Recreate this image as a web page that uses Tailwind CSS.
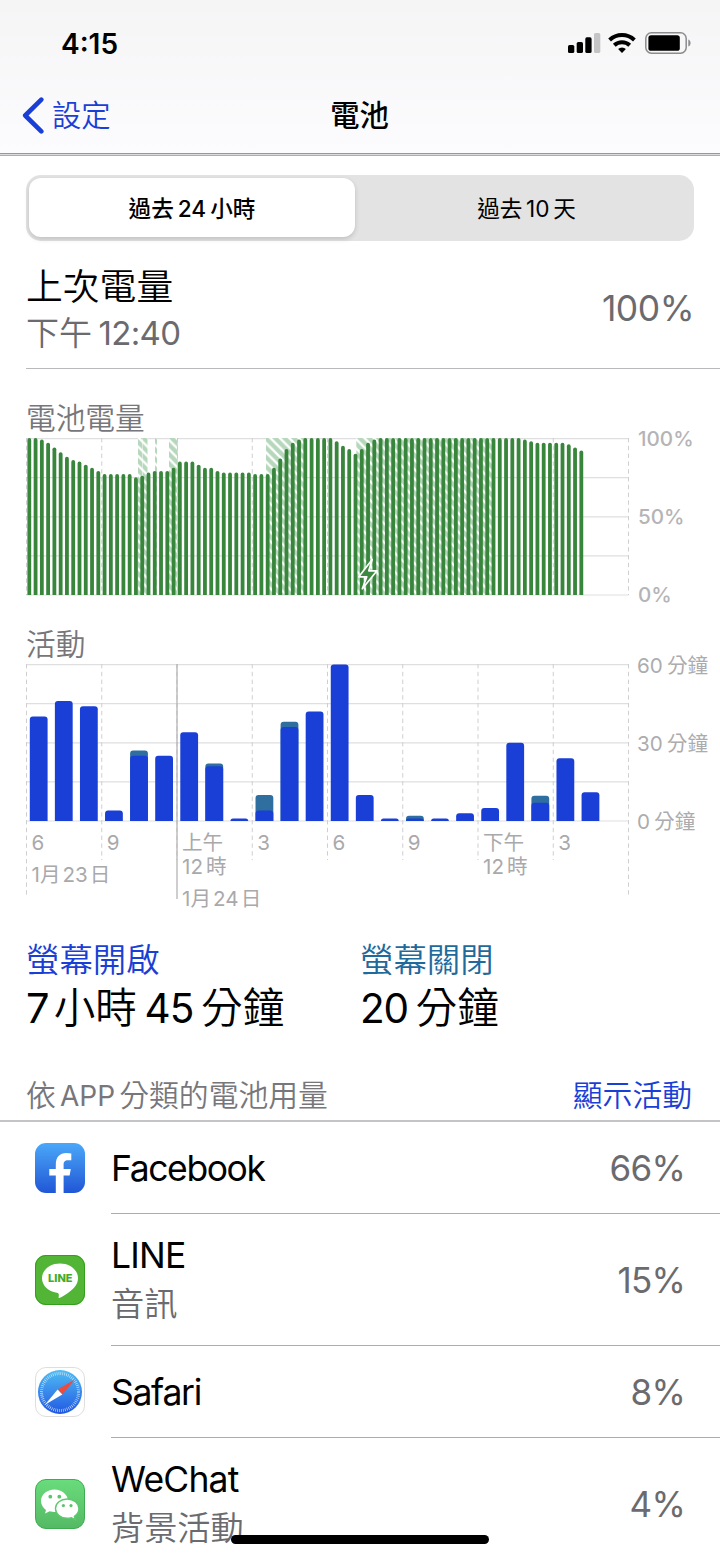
<!DOCTYPE html>
<html lang="zh-Hant">
  <head>
    <meta charset="UTF-8" />
    <meta name="viewport" content="width=device-width, initial-scale=1.0" />
    <title>電池</title>
    <script src="https://cdn.jsdelivr.net/npm/@tailwindcss/browser@4"></script>
  </head>
  <body class="bg-white">
    <div class="relative w-[720px] h-[1558px] overflow-hidden bg-white text-black whitespace-nowrap font-['Inter','Noto_Sans_CJK_TC',sans-serif]">
      <header class="h-[156px] flex flex-col bg-linear-to-b from-[#f5f5f6] to-[#fcfcfe]">
        <div class="h-[86px] pl-[61px] pr-[29px] flex items-center justify-between">
          <span class="pt-[1px] text-[28px] leading-8 font-semibold">4:15</span>
          <div class="flex items-center">
            <svg class="w-[33px] h-[20px] mr-[7px]" viewBox="0 0 33 20">
              <rect x="0" y="12" width="6.3" height="8" rx="1.6" />
              <rect x="8.7" y="9" width="6.3" height="11" rx="1.6" />
              <rect x="17.3" y="4.3" width="6.3" height="15.7" rx="1.6" />
              <rect x="26" y="0" width="6.3" height="20" rx="1.6" fill="#c4c4c6" />
            </svg>
            <svg class="w-[28px] h-[20px] mr-[9px]" viewBox="0 0 28 20">
              <g fill="none" stroke="#000" stroke-width="4">
                <path d="M1.6 7a18 18 0 0 1 24.8 0" />
                <path d="M6.3 12.2a11.3 11.3 0 0 1 15.4 0" />
              </g>
              <path d="M14 20l-3.9-4a5.6 5.6 0 0 1 7.8 0z" />
            </svg>
            <svg class="w-[46px] h-[22px]" viewBox="0 0 46 22">
              <rect x="0.8" y="0.8" width="40.4" height="20.4" rx="5.6" fill="none" stroke="#8c8c8e" stroke-width="1.5" />
              <rect x="3.4" y="3.2" width="31.4" height="15.6" rx="2.6" />
              <path d="M43.3 7.4c3 1.2 3 6 0 7.2z" fill="#8c8c8e" />
            </svg>
          </div>
        </div>
        <div class="h-[67px] pb-[9px] grid grid-cols-3 items-center">
          <a class="flex items-center pl-[22px] text-[#1a3fd6]">
            <svg class="w-[22px] h-[37px] mr-[8px]" viewBox="0 0 22 37">
              <path d="M19.3 2.6L3.2 18.5L19.3 34.4" fill="none" stroke="#1a3fd6" stroke-width="4.6" stroke-linecap="round" stroke-linejoin="round" />
            </svg>
            <span class="pt-[1px] text-[29.3px] leading-9 font-[350]">設定</span>
          </a>
          <h1 class="pt-[1px] pr-[1px] text-center text-[29.3px] leading-9 font-medium">電池</h1>
        </div>
        <div class="h-[3px] bg-[#dcdcde] border-t border-b border-t-[#98989a] border-b-[#adadaf]"></div>
      </header>

      <div class="mt-[19px] ml-[26px] w-[668px] h-[66px] rounded-[15px] bg-[#e3e3e4] p-[3px] flex text-[22.6px] leading-8">
        <div class="w-[326px] h-[59px] pt-[2px] rounded-[12px] bg-white shadow-[0_2px_5px_rgba(0,0,0,0.16)] flex items-center justify-center font-medium">過去<span class="mx-[0.18em]">24</span>小時</div>
        <div class="flex-1 h-[60px] pt-[1px] flex items-center justify-center pl-[7px] font-normal">過去<span class="mx-[0.16em]">10</span>天</div>
      </div>

      <section class="ml-[26px] mt-[20px] h-[108px] pr-[26px] pb-[11px] flex items-center justify-between border-b border-[#b9b9bb]">
        <div>
          <div class="text-[36.8px] leading-[48px] font-[350]">上次電量</div>
          <div class="text-[33px] leading-[45px] text-[#6b6b6f] font-[350]">下午<span class="ml-[0.2em] tracking-[-0.7px] font-normal">12:40</span></div>
        </div>
        <div class="text-[35.5px] leading-10 tracking-[-0.5px] text-[#6b6b6f]">100%</div>
      </section>

      <section class="ml-[26px] mt-[31px]">
        <h2 class="h-[38px] text-[29.7px] leading-[36px] font-[350] text-[#77777b]">電池電量</h2>
        <div class="flex h-[158px]">
          <svg id="level" class="w-[604px] h-[158px]" viewBox="0 0 604 158">
            <defs>
              <pattern id="hatch" width="9.4" height="9.4" patternUnits="userSpaceOnUse">
                <rect width="9.4" height="9.4" fill="#b6d7bb" />
                <path d="M-2 -2L11.4 11.4M-2 7.4L2 11.4M7.4 -2L11.4 2" stroke="#fff" stroke-width="2.4" />
              </pattern>
            </defs>
          </svg>
          <div class="-my-[12px] ml-[8px] flex flex-col justify-between text-[20.6px] leading-[26px] font-medium text-[#b4b4b6]">
            <span>100%</span><span>50%</span><span>0%</span>
          </div>
        </div>
      </section>

      <section class="ml-[26px] mt-[29px] h-[272px]">
        <h2 class="h-[39px] text-[29.7px] leading-[38px] font-[350] text-[#77777b]">活動</h2>
        <div class="relative flex h-[158px]">
          <svg id="activity" class="w-[604px] h-[236px] shrink-0" viewBox="0 0 604 236"></svg>
          <div class="-mt-[11px] -mb-[13px] ml-[7px] flex flex-col justify-between text-[20.6px] leading-[26px] text-[#acacae]">
            <span>60<span class="ml-[0.2em]">分鐘</span></span>
            <span>30<span class="ml-[0.2em]">分鐘</span></span>
            <span>0<span class="ml-[0.2em]">分鐘</span></span>
          </div>
          <!-- hour and date labels lie over the lower part of the grid -->
          <div class="absolute left-[5.5px] top-[167px] grid grid-cols-[repeat(8,75.25px)] text-[20.6px] leading-6 text-[#a9a9ab]">
            <div>6<p class="pt-[8px]">1月<span class="mx-[0.1em]">23</span>日</p></div>
            <div>9</div>
            <div>上午<br />12<span class="ml-[0.15em]">時</span><p class="pt-[8px]">1月<span class="mx-[0.1em]">24</span>日</p></div>
            <div>3</div>
            <div>6</div>
            <div>9</div>
            <div>下午<br />12<span class="ml-[0.15em]">時</span></div>
            <div>3</div>
          </div>
        </div>
      </section>

      <section class="mt-[40px] pl-[26px] grid grid-cols-[334px_1fr] font-[350]">
        <div>
          <div class="text-[33.4px] leading-[46px] text-[#1a3fd6]">螢幕開啟</div>
          <div class="h-[50px] text-[41.6px] leading-[50px]"><span class="font-normal">7</span><span class="ml-[0.1em]">小時</span><span class="mx-[0.19em] tracking-[-1px] text-[40.5px] font-normal">45</span>分鐘</div>
        </div>
        <div>
          <div class="text-[33.4px] leading-[46px] text-[#1f6a9c]">螢幕關閉</div>
          <div class="h-[50px] text-[41.6px] leading-[50px]"><span class="mr-[0.19em] tracking-[-1.2px] text-[40.5px] font-normal">20</span>分鐘</div>
        </div>
      </section>

      <div class="mt-[39px] h-[50px] pb-[2px] pl-[26px] pr-[28px] flex items-center justify-between border-b-2 border-[#c4c4c6] text-[29.8px] leading-9 font-[350]">
        <span class="text-[#77777b]">依<span class="mx-[0.15em] text-[28px] font-normal">APP</span>分類的電池用量</span>
        <a class="text-[#1a3fd6]">顯示活動</a>
      </div>

      <ul>
        <li class="h-[92px] pl-[35px] flex items-center">
          <svg class="w-[50px] h-[50px]" viewBox="0 0 50 50">
            <defs>
              <linearGradient id="fb" x2="0" y2="1"><stop stop-color="#4ba8f8" /><stop offset="1" stop-color="#2156d6" /></linearGradient>
            </defs>
            <rect width="50" height="50" rx="11" fill="url(#fb)" />
            <path d="M20.8 50V32.5h-6.5V26h6.5v-4.3c0-7.8 4-11.7 10.5-11.7 2 0 3.7.2 5 .5v6.7h-3.2c-3.4 0-4.5 1.6-4.5 4.3V26h7.2l-1.2 6.5h-6V50z" fill="#fff" />
          </svg>
          <div class="ml-[26px] flex-1 self-stretch flex items-center justify-between pr-[35px] border-b border-[#adadaf] text-[35.5px] leading-10">
            <span class="tracking-[-1.4px] pt-[2px]">Facebook</span><span class="text-[35px] tracking-[-0.8px] text-[#6b6b6f]">66%</span>
          </div>
        </li>
        <li class="h-[132px] pl-[35px] flex items-center">
          <svg class="w-[50px] h-[50px]" viewBox="0 0 50 50">
            <rect width="50" height="50" rx="11" fill="#53b535" />
            <rect x="0.5" y="0.5" width="49" height="49" rx="10.5" fill="none" stroke="#33a01c" />
            <path d="M25 8.5C15 8.5 7 15 7 23.3c0 7.2 6.2 13.2 14.8 14.5 2.2.4 2.3 1.2 1.8 4.7 0 .5.2.8.8.5 4.2-1.8 11-6.2 14.6-10.2C41.7 30 43 26.7 43 23.3 43 15 35 8.5 25 8.5z" fill="#fff" />
            <text x="25.3" y="27.3" text-anchor="middle" textLength="24.5" class="fill-[#45ab29] text-[11px] font-extrabold">LINE</text>
          </svg>
          <div class="ml-[26px] flex-1 self-stretch flex items-center justify-between pr-[35px] border-b border-[#adadaf] text-[35.5px] leading-10">
            <div>
              <div class="leading-[48px] tracking-[-0.8px]">LINE</div>
              <div class="text-[33.2px] leading-[48px] font-[350] text-[#6b6b6f]">音訊</div>
            </div>
            <span class="text-[35px] tracking-[-0.8px] text-[#6b6b6f]">15%</span>
          </div>
        </li>
        <li class="h-[92px] pl-[35px] flex items-center">
          <svg class="w-[50px] h-[50px]" viewBox="0 0 50 50">
            <defs>
              <linearGradient id="sf" x2="0" y2="1"><stop stop-color="#4fbdf3" /><stop offset="1" stop-color="#2257e3" /></linearGradient>
            </defs>
            <rect x="0.5" y="0.5" width="49" height="49" rx="10.5" fill="#fff" stroke="#dededf" />
            <circle cx="25" cy="25" r="22" fill="url(#sf)" />
            <circle cx="25" cy="25" r="18.5" fill="none" stroke="#d5eafc" stroke-width="3" stroke-dasharray="0.6 1.337" />
            <path d="M40 12.3L22.6 22.6L27.3 27.4z" fill="#f04a3c" />
            <path d="M10 37.7L22.6 22.6L27.3 27.4z" fill="#fff" />
          </svg>
          <div class="ml-[26px] flex-1 self-stretch flex items-center justify-between pr-[35px] border-b border-[#adadaf] text-[35.5px] leading-10">
            <span class="tracking-[-1.3px] pt-[2px]">Safari</span><span class="text-[35px] tracking-[-0.8px] text-[#6b6b6f]">8%</span>
          </div>
        </li>
        <li class="h-[132px] pl-[35px] flex items-center">
          <svg class="w-[50px] h-[50px]" viewBox="0 0 50 50">
            <defs>
              <linearGradient id="wc" x2="0" y2="1"><stop stop-color="#69dc7c" /><stop offset="1" stop-color="#55b964" /></linearGradient>
            </defs>
            <rect x="0.5" y="0.5" width="49" height="49" rx="10.5" fill="url(#wc)" stroke="#3cae4f" />
            <path d="M19.5 10.5C12 10.5 6 15.6 6 22c0 3.6 2 6.8 5 8.9L10 34.5l4.7-2.3c1.5.5 3.1.8 4.8.8C27 33 33 28.2 33 22S27 10.5 19.5 10.5z" fill="#fff" />
            <path d="M32.2 20C25.7 20 20.5 24.3 20.5 29.6S25.7 39.3 32.2 39.3c1.5 0 2.9-.2 4.2-.6l3.9 2-.9-3.3c2.8-1.8 4.5-4.6 4.5-7.8C43.9 24.3 38.7 20 32.2 20z" fill="#fff" stroke="#5fc96f" stroke-width="1.4" />
            <g fill="#5bc56b">
              <circle cx="15.3" cy="17.7" r="1.9" /><circle cx="24.3" cy="17.7" r="1.9" />
              <circle cx="28.4" cy="26.6" r="1.6" /><circle cx="36" cy="26.6" r="1.6" />
            </g>
          </svg>
          <div class="ml-[26px] flex-1 self-stretch flex items-center justify-between pr-[35px] text-[35.5px] leading-10">
            <div>
              <div class="leading-[48px] tracking-[-0.8px]">WeChat</div>
              <div class="text-[33.2px] leading-[48px] font-[350] text-[#6b6b6f]">背景活動</div>
            </div>
            <span class="text-[35px] tracking-[-0.8px] text-[#6b6b6f]">4%</span>
          </div>
        </li>
      </ul>

      <!-- home indicator -->
      <div class="absolute left-[231px] top-[1535px] w-[258px] h-[9px] rounded-full bg-black"></div>
    </div>

    <script>
      // charge at each quarter hour, in percent
      const levels = [
        100, 100, 99, 97, 94, 91, 88, 86, 85, 83, 81, 79, 77, 77, 77, 77, 77, 75, 76, 78, 79, 79, 79, 81,
        85, 85, 85, 83, 81, 81, 79, 78, 78, 78, 78, 78, 77, 77, 77, 81, 87, 93, 97, 99, 100, 100, 100, 100,
        100, 98, 95, 93, 90, 93, 97, 99, ...Array(23).fill(100), 99, 98, 97, 97, 97, 97, 97, 96, 94, 92,
      ];
      // [left, width] of the charging periods
      const charging = [[112, 4.5], [117, 4.5], [129, 2], [143, 8], [240, 39], [330.3, 137]];
      // minutes per hour: [screen on, total]
      const minutes = [
        [40], [46], [44], [4], [25, 27], [25], [34], [21, 22], [1], [4, 10], [36, 38], [42],
        [60], [10], [1], [1, 2], [1], [3], [5], [30], [7, 9.7], [24], [11],
      ];

      const hline = (y) => `<path d="M0 ${y}H602.5" stroke="#dfdfe1" stroke-width="1.2"/>`;
      const vline = (x, y) => `<path d="M${x} 0V${y}" stroke="#cfcfd2" stroke-dasharray="4.4 3.4"/>`;

      let svg = "";
      for (let i = 0; i < 5; i++) svg += hline(0.6 + i * 39.1);
      for (let i = 0; i < 9; i++) svg += vline(0.5 + i * 75.25, 157);
      svg += `<path d="M151 0V157" stroke="#b4b4b6"/>`;
      charging.forEach(([x, w]) => {
        svg += `<rect x="${x}" y="0" width="${w}" height="157" fill="url(#hatch)"/>`;
      });
      levels.forEach((v, i) => {
        const x = 3.3 + i * 6.273;
        const y = 157 - v * 1.57;
        svg += `<path d="M${x - 1.9} 157V${y + 1.9}a1.9 1.9 0 0 1 3.8 0V157z" fill="#38853c"/>`;
      });
      svg += `<path d="M346.2 121.5L332.8 138.8H340.8L336.3 150.8L351 132.8H342.8z" fill="#3e8842" stroke="#fff" stroke-width="1.7" stroke-linejoin="round"/>`;
      document.getElementById("level").innerHTML += svg;

      svg = "";
      for (let i = 0; i < 5; i++) svg += hline(0.6 + i * 39.1);
      for (let i = 0; i < 9; i++) svg += vline(0.5 + i * 75.25, i % 8 == 0 ? 234 : 196);
      svg += `<path d="M151 0V235" stroke="#b4b4b6" stroke-width="1.3"/>`;
      const bar = (x, v, color) => {
        const h = v * 2.61;
        const r = Math.min(3, h);
        return `<path d="M${x} 157V${157 - h + r}q0 ${-r} ${r} ${-r}h${17.8 - 2 * r}q${r} 0 ${r} ${r}V157z" fill="${color}"/>`;
      };
      minutes.forEach(([on, total], i) => {
        const x = 3.8 + i * 25.08;
        if (total) svg += bar(x, total, "#2f6f9f");
        svg += bar(x, on, "#1a3fd6");
      });
      document.getElementById("activity").innerHTML = svg;
    </script>
  </body>
</html>
